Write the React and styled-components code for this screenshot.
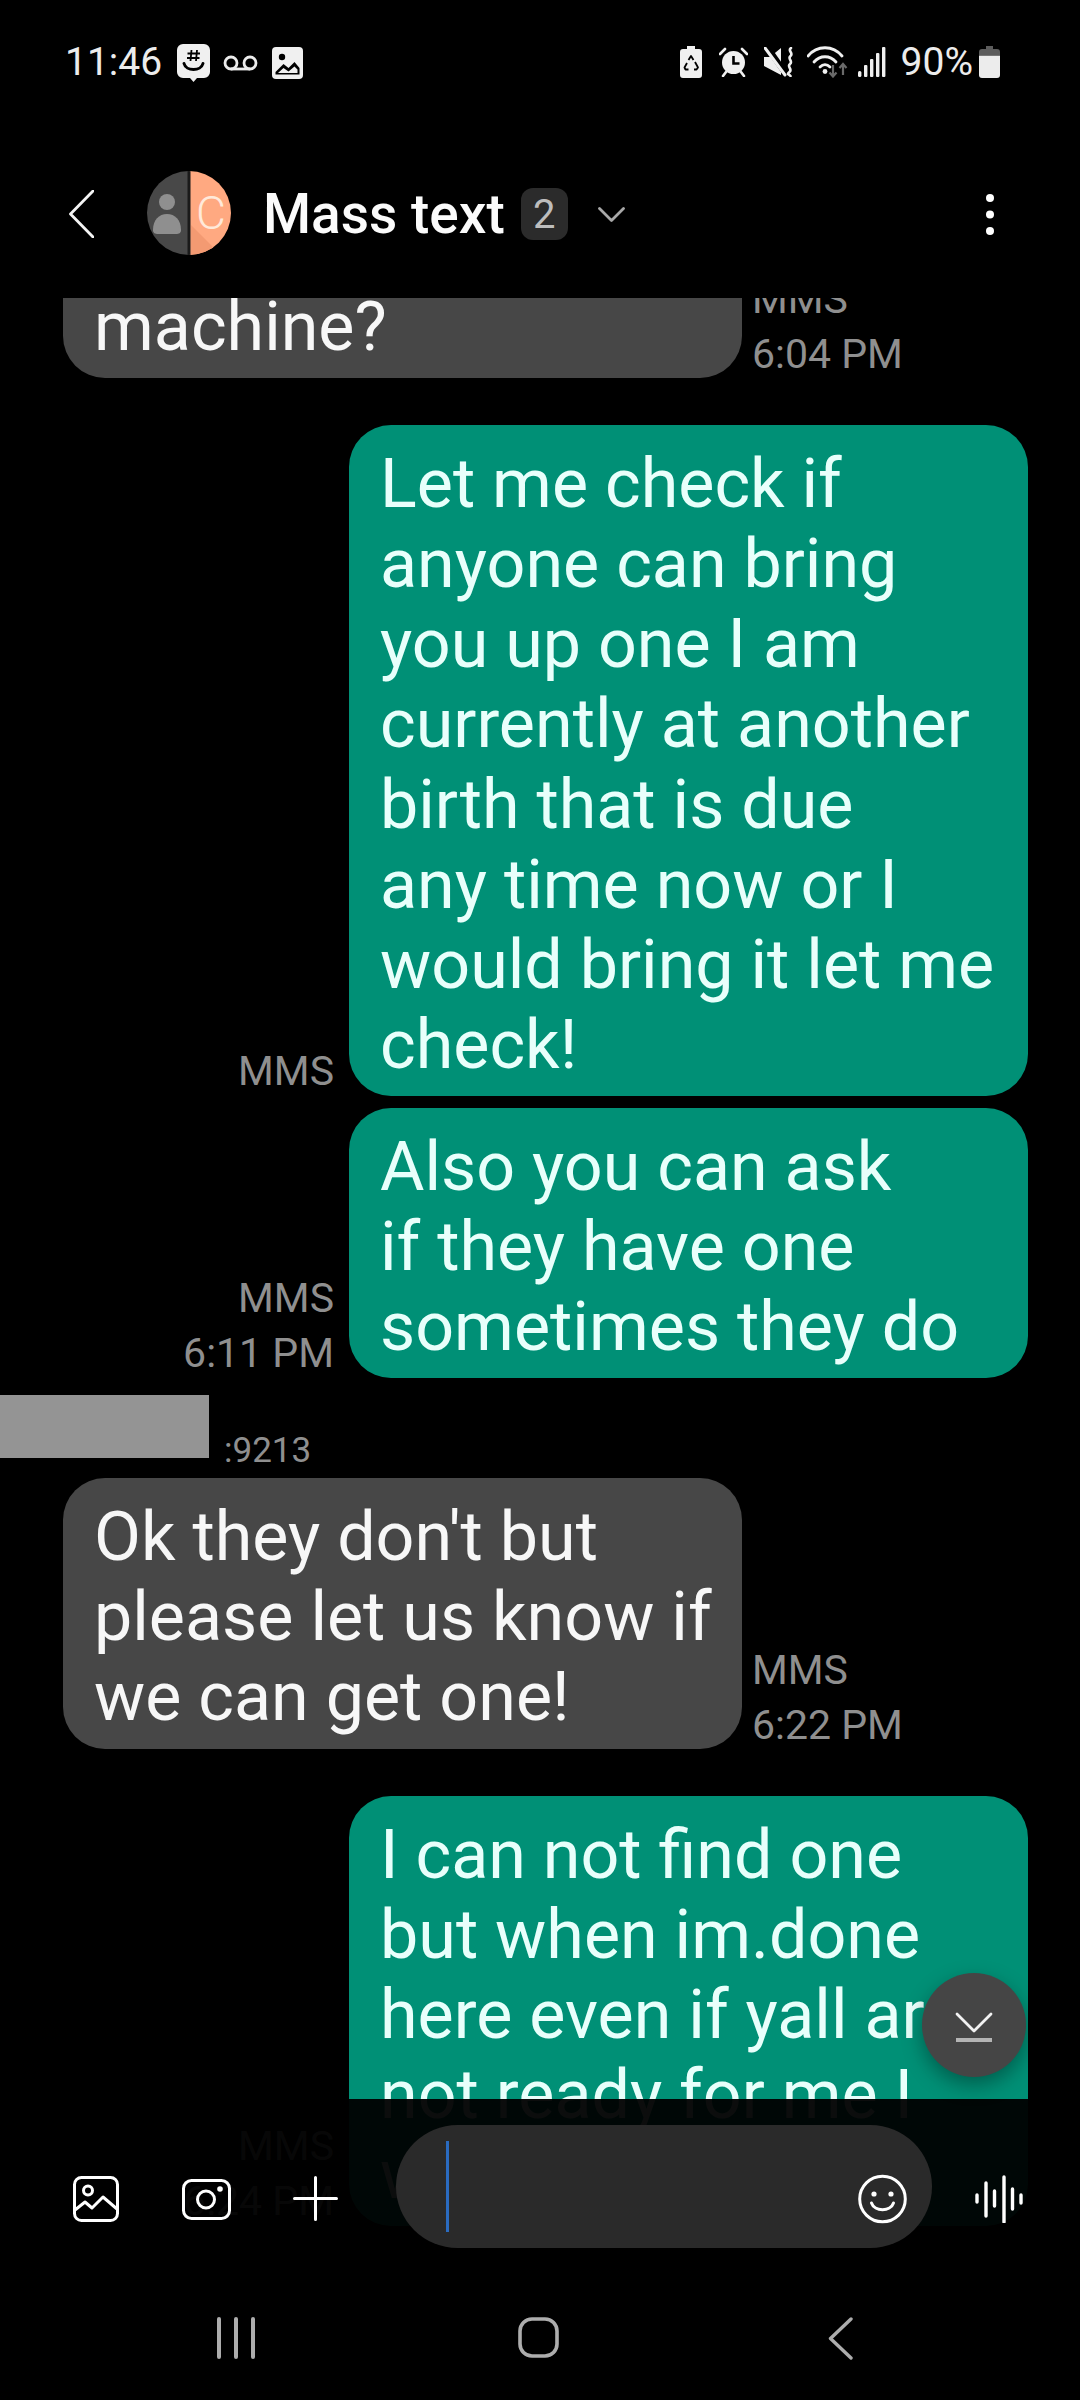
import React from "react";
import styled, { createGlobalStyle } from "styled-components";

const Global = createGlobalStyle`
  html, body { margin: 0; padding: 0; background: #000; }
  * { box-sizing: border-box; }
`;

const Phone = styled.div`
  width: 1080px;
  height: 2400px;
  background: #000;
  display: flex;
  flex-direction: column;
  overflow: hidden;
  font-family: Roboto, "Liberation Sans", sans-serif;
`;

const StatusBar = styled.div`
  height: 122px;
  flex: none;
  padding: 44px 80px 0 65px;
  display: flex;
  justify-content: space-between;
  align-items: flex-start;
  color: #ececec;
`;
const StatusGroup = styled.div`
  display: flex;
  align-items: flex-start;
`;
const StatusText = styled.span`
  font-size: 39px;
  line-height: 34px;
  margin-top: 1px;
  margin-left: ${(p) => p.$ml || 0}px;
`;
const StatusIcon = styled.svg`
  display: block;
  flex: none;
  margin-left: ${(p) => p.$ml || 0}px;
  margin-top: ${(p) => p.$mt || 0}px;
`;

const Header = styled.header`
  height: 176px;
  flex: none;
  padding: 8px 86px 0 69px;
  display: flex;
  align-items: center;
`;
const HeaderIcon = styled.svg`
  display: block;
  flex: none;
  margin-left: ${(p) => p.$ml || 0}px;
  ${(p) => p.$push && "margin-left: auto;"}
`;
const Avatar = styled.div`
  position: relative;
  width: 84px;
  height: 84px;
  margin: -2px 0 0 53px;
  flex: none;
`;
const AvatarInitial = styled.span`
  position: absolute;
  left: 49px;
  top: 19px;
  font-size: 46px;
  line-height: 46px;
  font-weight: 300;
  color: #ffe9da;
`;
const Title = styled.h1`
  margin: 0 0 0 32px;
  font-size: 55px;
  line-height: 64px;
  font-weight: 500;
  color: #fbfbfb;
`;
const CountBadge = styled.span`
  margin-left: 16px;
  width: 47px;
  height: 52px;
  border-radius: 12px;
  background: #2b2b2b;
  color: #bdbdbd;
  font-size: 40px;
  line-height: 54px;
  text-align: center;
`;

const Thread = styled.main`
  position: relative;
  flex: 1;
  min-height: 0;
  overflow: hidden;
  display: flex;
  flex-direction: column;
`;
const Row = styled.div`
  display: flex;
  flex: none;
  align-items: flex-end;
  justify-content: ${(p) => (p.$out ? "flex-end" : "flex-start")};
  padding: ${(p) => (p.$out ? "0 52px 0 0" : "0 0 0 63px")};
  margin-top: ${(p) => p.$mt || 0}px;
`;
const Bubble = styled.div`
  width: 679px;
  flex: none;
  padding: 19px 20px 11px 31px;
  border-radius: 42px;
  background: ${(p) => (p.$out ? "#009076" : "#474747")};
  color: ${(p) => (p.$out ? "#e8fffb" : "#f7f7f7")};
  font-size: 68.2px;
  line-height: 80.1px;
  white-space: pre-line;
`;
const Meta = styled.div`
  flex: none;
  color: #8f8f8f;
  font-size: 41px;
  line-height: 55px;
  text-align: ${(p) => (p.$out ? "right" : "left")};
  margin: ${(p) => (p.$out ? "0 15px -3px 0" : "0 0 -4px 10px")};
`;
const SenderRow = styled.div`
  display: flex;
  flex: none;
  align-items: flex-start;
  height: 83px;
  margin-top: 17px;
`;
const Redaction = styled.div`
  width: 209px;
  height: 63px;
  background: #949494;
`;
const SenderNumber = styled.span`
  margin: 36px 0 0 15px;
  color: #8f8f8f;
  font-size: 35px;
  line-height: 40px;
`;

const ScrollButton = styled.button`
  position: absolute;
  left: 922px;
  top: 1675px;
  width: 104px;
  height: 104px;
  border: 0;
  padding: 0;
  border-radius: 50%;
  background: #454545;
  box-shadow: 0 8px 20px rgba(0, 0, 0, 0.35);
  display: flex;
  align-items: center;
  justify-content: center;
  z-index: 2;
`;

const Footer = styled.footer`
  position: absolute;
  left: 0;
  right: 0;
  bottom: 0;
  height: 301px;
  background: rgba(0, 0, 0, 0.95);
  padding-top: 26px;
`;
const ComposerRow = styled.div`
  display: flex;
  align-items: flex-start;
  padding-left: 73px;
`;
const ComposerIcon = styled.svg`
  display: block;
  flex: none;
  margin-left: ${(p) => p.$ml || 0}px;
  margin-top: ${(p) => p.$mt || 0}px;
`;
const Field = styled.div`
  width: 536px;
  height: 123px;
  margin-left: 58px;
  flex: none;
  border-radius: 62px;
  background: #2a2a2a;
  padding: 16px 25px 0 50px;
  display: flex;
  align-items: flex-start;
  justify-content: space-between;
`;
const Caret = styled.div`
  width: 3px;
  height: 91px;
  background: #2a6bc0;
`;

const NavBar = styled.nav`
  margin-top: 69px;
  padding-left: 85px;
  display: grid;
  grid-template-columns: repeat(3, 302px);
  justify-items: center;
`;

const Bars = () => (
  <svg width="38" height="42" viewBox="0 0 38 42" style={{ display: "block" }}>
    <g stroke="#adadad" strokeWidth="4" strokeLinecap="round">
      <path d="M2 2v38M19 2v38M36 2v38" />
    </g>
  </svg>
);

export default function App() {
  return (
    <Phone>
      <Global />
      <StatusBar>
        <StatusGroup>
          <StatusText>11:46</StatusText>
          {/* GroupMe */}
          <StatusIcon $ml={15} $mt={0} width="33" height="38" viewBox="0 0 33 38">
            <path d="M6 0h21a6 6 0 0 1 6 6v22a6 6 0 0 1-6 6h-7l-3.500 4-3.500-4H6a6 6 0 0 1-6-6V6a6 6 0 0 1 6-6z" fill="#f0f0f0" />
            <path d="M14.500 6l-1 11M20 6l-1 11M10.500 9.500h12.500M10 14h12.500" stroke="#000" strokeWidth="1.800" />
            <path d="M7 19.500c2 8 17 8 19 0" stroke="#000" strokeWidth="3" fill="none" strokeLinecap="round" />
          </StatusIcon>
          {/* voicemail */}
          <StatusIcon $ml={13} $mt={11} width="35" height="16" viewBox="0 0 35 16">
            <g fill="none" stroke="#ececec" strokeWidth="2.800">
              <circle cx="8" cy="8" r="6" />
              <circle cx="27" cy="8" r="6" />
              <path d="M8 14h19" />
            </g>
          </StatusIcon>
          {/* picture */}
          <StatusIcon $ml={14} $mt={3} width="31" height="32" viewBox="0 0 31 32">
            <rect width="31" height="32" rx="4" fill="#f0f0f0" />
            <circle cx="10" cy="10" r="3.200" fill="#000" />
            <path d="M3.500 25l8-8 5 4 6-6 5 6v6.500h-24z" fill="#000" />
            <path d="M6 26l5.500-5 5 3.500 6-5 3 3v3.500z" fill="#f0f0f0" />
          </StatusIcon>
        </StatusGroup>
        <StatusGroup>
          {/* battery saver */}
          <StatusIcon $mt={2} width="22" height="32" viewBox="0 0 22 32">
            <path d="M7 0h8v3h4a3 3 0 0 1 3 3v23a3 3 0 0 1-3 3H3a3 3 0 0 1-3-3V6a3 3 0 0 1 3-3h4z" fill="#f0f0f0" />
            <g stroke="#000" strokeWidth="1.800" fill="none" strokeLinejoin="round">
              <path d="M8.500 14l2.500-4 2.500 4" />
              <path d="M15 16l3 5.500-1.500 2H14" />
              <path d="M8.500 23.500h-3l-1-2 2.500-4.500" />
            </g>
          </StatusIcon>
          {/* alarm */}
          <StatusIcon $ml={17} $mt={3} width="29" height="30" viewBox="0 0 29 30">
            <circle cx="14.500" cy="15.500" r="11.500" fill="#f0f0f0" />
            <path d="M14.500 9v7.500h6" stroke="#000" strokeWidth="2.600" fill="none" />
            <path d="M1 7l5-5M28 7l-5-5M4 29l3-4M25 29l-3-4" stroke="#f0f0f0" strokeWidth="2.600" strokeLinecap="round" />
          </StatusIcon>
          {/* vibrate / mute */}
          <StatusIcon $ml={16} $mt={3} width="30" height="30" viewBox="0 0 30 30">
            <path d="M0 10h6l11-9v27L0 19z" fill="#f0f0f0" />
            <path d="M3 0l19 27" stroke="#000" strokeWidth="6" />
            <path d="M1 1l20 27" stroke="#f0f0f0" strokeWidth="3" strokeLinecap="round" />
            <path d="M27 1c-4 3 3 5-.5 8s3 5-.5 8 3 5-.5 8 0 2 1 4" stroke="#f0f0f0" strokeWidth="2.600" fill="none" strokeLinecap="round" />
          </StatusIcon>
          {/* wifi */}
          <StatusIcon $ml={13} $mt={2} width="42" height="32" viewBox="0 0 42 32">
            <g fill="none" stroke="#f0f0f0" strokeWidth="2.800" strokeLinecap="round">
              <path d="M1 10c9-11 25-11 34 0" />
              <path d="M7 16c6-7 16-7 22 0" />
              <path d="M13 21c3-3 7-3 10 0" />
            </g>
            <circle cx="18" cy="25.500" r="2.400" fill="#f0f0f0" />
            <path d="M26 19v11M22.500 26.500l3.500 4 3.500-4" stroke="#6a6a6a" strokeWidth="2.200" fill="none" />
            <path d="M36 29V18M32.500 22l3.500-4 3.500 4" stroke="#6a6a6a" strokeWidth="2.200" fill="none" />
          </StatusIcon>
          {/* signal */}
          <StatusIcon $ml={9} $mt={3} width="28" height="30" viewBox="0 0 28 30">
            <g fill="#f0f0f0">
              <rect x="0" y="24" width="3.400" height="6" rx="1.500" />
              <rect x="6" y="18" width="3.400" height="12" rx="1" />
              <rect x="12" y="12" width="3.400" height="18" rx="1" />
              <rect x="18" y="6" width="3.400" height="24" rx="1" />
              <rect x="24" y="0" width="3.400" height="30" rx="1" />
            </g>
          </StatusIcon>
          <StatusText $ml={15}>90%</StatusText>
          {/* battery */}
          <StatusIcon $ml={6} $mt={2} width="21" height="32" viewBox="0 0 21 32">
            <path d="M7 0h7v3h4a3 3 0 0 1 3 3v3H0V6a3 3 0 0 1 3-3h4z" fill="#5c5c5c" />
            <path d="M0 9.500h21V29a3 3 0 0 1-3 3H3a3 3 0 0 1-3-3z" fill="#ececec" />
          </StatusIcon>
        </StatusGroup>
      </StatusBar>

      <Header>
        <HeaderIcon width="25" height="48" viewBox="0 0 25 48">
          <path d="M24 1L1.500 24 24 47" fill="none" stroke="#f4f4f4" strokeWidth="2.800" strokeLinecap="round" strokeLinejoin="round" />
        </HeaderIcon>
        <Avatar>
          <svg width="84" height="84" viewBox="0 0 84 84" style={{ display: "block" }}>
            <defs>
              <clipPath id="avatarClip">
                <circle cx="42" cy="42" r="42" />
              </clipPath>
            </defs>
            <g clipPath="url(#avatarClip)">
              <rect x="0" y="0" width="42" height="84" fill="#484848" />
              <rect x="42" y="0" width="42" height="84" fill="#ffa981" />
              <path d="M44 54l30 30H44z" fill="#f39a72" />
              <rect x="40.500" y="0" width="3" height="84" fill="#1a1a1a" />
              <circle cx="20" cy="31" r="8" fill="#8f8f8f" />
              <path d="M6 59c0-10 6-16 14-16s14 6 14 16c0 3-2 4-5 4H11c-3 0-5-1-5-4z" fill="#8f8f8f" />
            </g>
          </svg>
          <AvatarInitial>C</AvatarInitial>
        </Avatar>
        <Title>Mass text</Title>
        <CountBadge>2</CountBadge>
        <HeaderIcon $ml={30} width="27" height="15" viewBox="0 0 27 15">
          <path d="M1.500 1.500l12 12 12-12" fill="none" stroke="#a8a8a8" strokeWidth="2.800" strokeLinecap="round" strokeLinejoin="round" />
        </HeaderIcon>
        <HeaderIcon $push width="8" height="41" viewBox="0 0 8 41">
          <circle cx="4" cy="4" r="4" fill="#fff" />
          <circle cx="4" cy="20.500" r="4" fill="#fff" />
          <circle cx="4" cy="37" r="4" fill="#fff" />
        </HeaderIcon>
      </Header>

      <Thread>
        <Row $mt={-110}>
          <Bubble>{"\nmachine?"}</Bubble>
          <Meta>
            MMS
            <br />
            6:04 PM
          </Meta>
        </Row>
        <Row $out $mt={47}>
          <Meta $out>MMS</Meta>
          <Bubble $out>
            {"Let me check if\nanyone can bring\nyou up one I am\ncurrently at another\nbirth that is due\nany time now or I\nwould bring it let me\ncheck!"}
          </Bubble>
        </Row>
        <Row $out $mt={12}>
          <Meta $out>
            MMS
            <br />
            6:11 PM
          </Meta>
          <Bubble $out>{"Also you can ask\nif they have one\nsometimes they do"}</Bubble>
        </Row>
        <SenderRow>
          <Redaction />
          <SenderNumber>:9213</SenderNumber>
        </SenderRow>
        <Row>
          <Bubble>{"Ok they don't but\nplease let us know if\nwe can get one!"}</Bubble>
          <Meta>
            MMS
            <br />
            6:22 PM
          </Meta>
        </Row>
        <Row $out $mt={47}>
          <Meta $out>
            MMS
            <br />
            6:24 PM
          </Meta>
          <Bubble $out>
            {"I can not find one\nbut when im.done\nhere even if yall are\nnot ready for me I\nwill bring it over."}
          </Bubble>
        </Row>

        <ScrollButton aria-label="Scroll to bottom">
          <svg width="38" height="36" viewBox="0 0 38 36" style={{ display: "block", marginTop: 8 }}>
            <path d="M2 3l17 17L36 3" fill="none" stroke="#f2f2f2" strokeWidth="2.800" strokeLinecap="round" strokeLinejoin="round" />
            <path d="M1 29h36" stroke="#b4b4b4" strokeWidth="4" />
          </svg>
        </ScrollButton>

        <Footer>
          <ComposerRow>
            <ComposerIcon $mt={51} width="46" height="46" viewBox="0 0 46 46">
              <g fill="none" stroke="#fff" strokeWidth="3" strokeLinecap="round" strokeLinejoin="round">
                <rect x="1.500" y="1.500" width="43" height="43" rx="7" />
                <circle cx="15" cy="14.500" r="4.500" />
                <path d="M2 34l10-8 7 6 11-11 14 12" />
              </g>
            </ComposerIcon>
            <ComposerIcon $ml={63} $mt={54} width="49" height="41" viewBox="0 0 49 41">
              <g fill="none" stroke="#fff" strokeWidth="3">
                <rect x="1.500" y="1.500" width="46" height="38" rx="8" />
                <circle cx="24" cy="20.500" r="8.500" />
              </g>
              <circle cx="38" cy="10" r="2.800" fill="#fff" />
            </ComposerIcon>
            <ComposerIcon $ml={62} $mt={51} width="45" height="45" viewBox="0 0 45 45">
              <path d="M22.500 1.500v42M1.500 22.500h42" stroke="#fff" strokeWidth="3" strokeLinecap="round" />
            </ComposerIcon>
            <Field>
              <Caret />
              <ComposerIcon $mt={33} width="49" height="50" viewBox="0 0 49 50">
                <circle cx="24.500" cy="25" r="22.800" fill="none" stroke="#fff" strokeWidth="3" />
                <circle cx="16" cy="20" r="2.600" fill="#fff" />
                <circle cx="33" cy="20" r="2.600" fill="#fff" />
                <path d="M13.500 29c3 9 19 9 22 0" fill="none" stroke="#fff" strokeWidth="3" strokeLinecap="round" />
              </ComposerIcon>
            </Field>
            <ComposerIcon $ml={43} $mt={50} width="48" height="48" viewBox="0 0 48 48">
              <g stroke="#fff" strokeWidth="3.400" strokeLinecap="round">
                <path d="M2 20v7M11 8v33M19.500 16v15M29 2v45M37.500 14v20M46 20v8" />
              </g>
            </ComposerIcon>
          </ComposerRow>
          <NavBar>
            <Bars />
            <svg width="41" height="41" viewBox="0 0 41 41" style={{ display: "block" }}>
              <rect x="2" y="2" width="37" height="37" rx="12" fill="none" stroke="#adadad" strokeWidth="3.600" />
            </svg>
            <svg width="25" height="43" viewBox="0 0 25 43" style={{ display: "block" }}>
              <path d="M23 2L2.500 21.500 23 41" fill="none" stroke="#adadad" strokeWidth="3.400" strokeLinecap="round" strokeLinejoin="round" />
            </svg>
          </NavBar>
        </Footer>
      </Thread>
    </Phone>
  );
}
